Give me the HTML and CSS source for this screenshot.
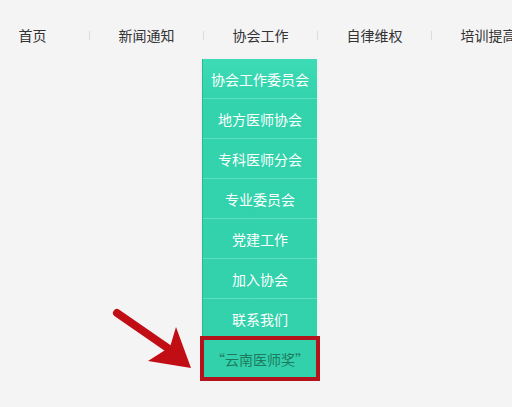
FILE: index.html
```html
<!DOCTYPE html>
<html lang="zh-CN">
<head>
  <meta charset="UTF-8" />
  <meta name="viewport" content="width=device-width, initial-scale=1.0"/>
  <title>协会工作</title>
  <link rel="stylesheet" href="styles.css">
</head>
<body>

  <div class="page">
    <div class="main">
      <ul class="nav">
        <li class="nav-item">首页</li>
        <li class="sep"></li>
        <li class="nav-item">新闻通知</li>
        <li class="sep"></li>
        <li class="nav-item">
          协会工作
          <ul class="dropdown">
            <li>协会工作委员会</li>
            <li>地方医师协会</li>
            <li>专科医师分会</li>
            <li>专业委员会</li>
            <li>党建工作</li>
            <li>加入协会</li>
            <li>联系我们</li>
            <li class="marked">“云南医师奖”</li>
          </ul>
        </li>
        <li class="sep"></li>
        <li class="nav-item">自律维权</li>
        <li class="sep"></li>
        <li class="nav-item">培训提高</li>
      </ul>

      <svg class="arrow" width="90" height="75" viewBox="110 300 90 75">
        <line x1="117" y1="313" x2="172" y2="351" stroke="#c10d14" stroke-width="8" stroke-linecap="round"/>
        <polygon points="191,368 176,327 170,347 148,361" fill="#c10d14"/>
      </svg>
    </div>
    <div class="edge"></div>
  </div>

</body>
</html>
```

FILE: styles.css
```css
body {
  margin: 0;
  font-family: "Noto Sans CJK SC", "Noto Sans", sans-serif;
  background: #f4f4f5;
  color: #333;
}
ul {
  list-style: none;
  margin: 0;
  padding: 0;
}
.page {
  display: flex;
  height: 407px;
  overflow: hidden;
}
.main {
  flex: 1;
  position: relative;
}
.edge {
  width: 3px;
  background: #111;
}
.nav {
  display: flex;
  align-items: center;
  margin-left: -24px;
  padding-top: 25px;
  white-space: nowrap;
}
.nav-item {
  flex: none;
  width: 113px;
  text-align: center;
  font-size: 14px;
  line-height: 20px;
  position: relative;
}
.sep {
  flex: none;
  width: 1px;
  height: 9px;
  background: #dcdcdc;
}
.dropdown {
  position: absolute;
  top: 34px;
  left: -2px;
  width: 114px;
  background: linear-gradient(#3ddbb6, #33d3ad 12%, #32d1ab);
  border-left: 1px solid #2bb893;
  box-shadow: 0 1px 3px rgba(0, 0, 0, 0.08);
}
.dropdown li {
  height: 39px;
  line-height: 41px;
  border-bottom: 1px solid #5ddfc0;
  color: #fff;
  font-size: 14px;
  text-align: center;
}
.dropdown .marked {
  border-bottom: none;
  color: #1e7a5e;
  outline: 4px solid #b3131b;
  outline-offset: -1px;
}
.arrow {
  position: absolute;
  left: 110px;
  top: 300px;
}
```
